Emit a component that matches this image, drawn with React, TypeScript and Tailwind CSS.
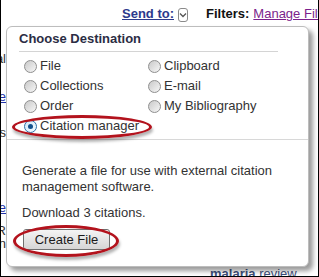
import React from "react"

const leftOptions = ["File", "Collections", "Order", "Citation manager"]
const rightOptions = ["Clipboard", "E-mail", "My Bibliography"]

function Radio({ checked }: { checked?: boolean }) {
  if (checked) {
    return (
      <span className="flex h-[13px] w-[13px] flex-shrink-0 items-center justify-center rounded-full border border-[#2d6ea8] bg-linear-to-br from-[#cfe6f7] to-[#f4fbff]">
        <span className="h-[5px] w-[5px] rounded-full bg-[#12508c]" />
      </span>
    )
  }
  return (
    <span className="h-[13px] w-[13px] flex-shrink-0 rounded-full border border-[#8f8f8f] bg-linear-to-br from-[#c9c9c9] to-[#f7f7f7]" />
  )
}

function Option({ label, checked }: { label: string; checked?: boolean }) {
  return (
    <div className="flex h-[20px] items-center gap-[3px]">
      <Radio checked={checked} />
      <span className="whitespace-nowrap">{label}</span>
    </div>
  )
}

export default function App() {
  return (
    <div className="relative flex h-[277px] w-[319px] flex-col overflow-hidden border-x border-b border-black bg-white font-['Liberation_Sans',Arial,sans-serif] text-[13px] leading-[16px] text-[#333]">
      {/* Page header */}
      <div className="flex h-[26px] flex-shrink-0 items-start whitespace-nowrap pl-[121px] pt-[6px]">
        <span className="font-bold text-[#2c3a8c] underline">Send to:</span>
        <span className="ml-[4px] mt-[2px] flex h-[14px] w-[14px] items-center justify-center rounded-[3px] border border-[#8a8a8a] bg-white">
          <svg width="8" height="6" viewBox="0 0 8 6" fill="none">
            <path d="M1 1.5 L4 4.5 L7 1.5" stroke="#555" strokeWidth="1.3" />
          </svg>
        </span>
        <span className="ml-[18px] font-bold text-[#111]">Filters:</span>
        <span className="ml-[4px] text-[#7b1f8c] underline">Manage Filters</span>
      </div>

      {/* Page content, mostly hidden behind the popup */}
      <div className="flex flex-1 flex-row">
        <div className="flex w-[5px] flex-col overflow-hidden">
          <div className="mt-[25px] flex justify-end whitespace-nowrap text-[#333]">al</div>
          <div className="mt-[22px] flex justify-end whitespace-nowrap text-[#2233aa] underline">ne</div>
          <div className="mt-[20px] flex justify-end whitespace-nowrap">es</div>
          <div className="mt-[59px] flex justify-end whitespace-nowrap text-[#2233aa] underline">ne</div>
          <div className="mt-[8px] flex justify-end whitespace-nowrap leading-[13px]">R</div>
          <div className="flex justify-end whitespace-nowrap leading-[13px]">n</div>
        </div>
        <div className="flex flex-1 flex-col justify-end">
          <div className="mb-[-6px] whitespace-nowrap pl-[204px] text-[#3d4f7c]">
            <span className="font-bold">malaria</span> review
          </div>
        </div>
      </div>

      {/* Send to popup */}
      <div className="absolute left-[5px] top-[26px] h-[241px] w-[303px] rounded-[6px] border border-[#bdbdbd] bg-white shadow-[4px_4px_5px_rgba(0,0,0,0.4)]">
        <div className="pl-[12px] pt-[4px] font-bold text-[#2b2d44]">Choose Destination</div>
        <div className="ml-[12px] mt-[4px] h-px w-[259px] bg-[#d4d4d4]" />
        <div className="mt-[4px] flex pl-[17px]">
          <div className="w-[124px]">
            {leftOptions.map((o) => (
              <Option key={o} label={o} checked={o === "Citation manager"} />
            ))}
          </div>
          <div>
            {rightOptions.map((o) => (
              <Option key={o} label={o} />
            ))}
          </div>
        </div>
        <div className="mt-[3px] h-px bg-[#d8d8d8]" />
        <div className="px-[15px] pt-[23px]">
          <p>Generate a file for use with external citation management software.</p>
          <p className="mt-[10px]">Download 3 citations.</p>
          <button className="ml-[1px] mt-[8px] h-[21px] w-[87px] rounded-[3px] border border-[#707070] bg-linear-to-b from-[#f4f4f4] to-[#d6d6d6] text-[13px] text-[#1a1a1a]">
            Create File
          </button>
        </div>
      </div>

      {/* Red highlight ellipses */}
      <div className="absolute left-[11px] top-[115px] h-[24px] w-[140px] rounded-[50%] border-[3px] border-[#b3131d] shadow-[1px_3px_3px_rgba(0,0,0,0.3)]" />
      <div className="absolute left-[12px] top-[225px] h-[32px] w-[106px] rounded-[50%] border-[3px] border-[#b3131d] shadow-[1px_3px_3px_rgba(0,0,0,0.3)]" />
    </div>
  )
}
